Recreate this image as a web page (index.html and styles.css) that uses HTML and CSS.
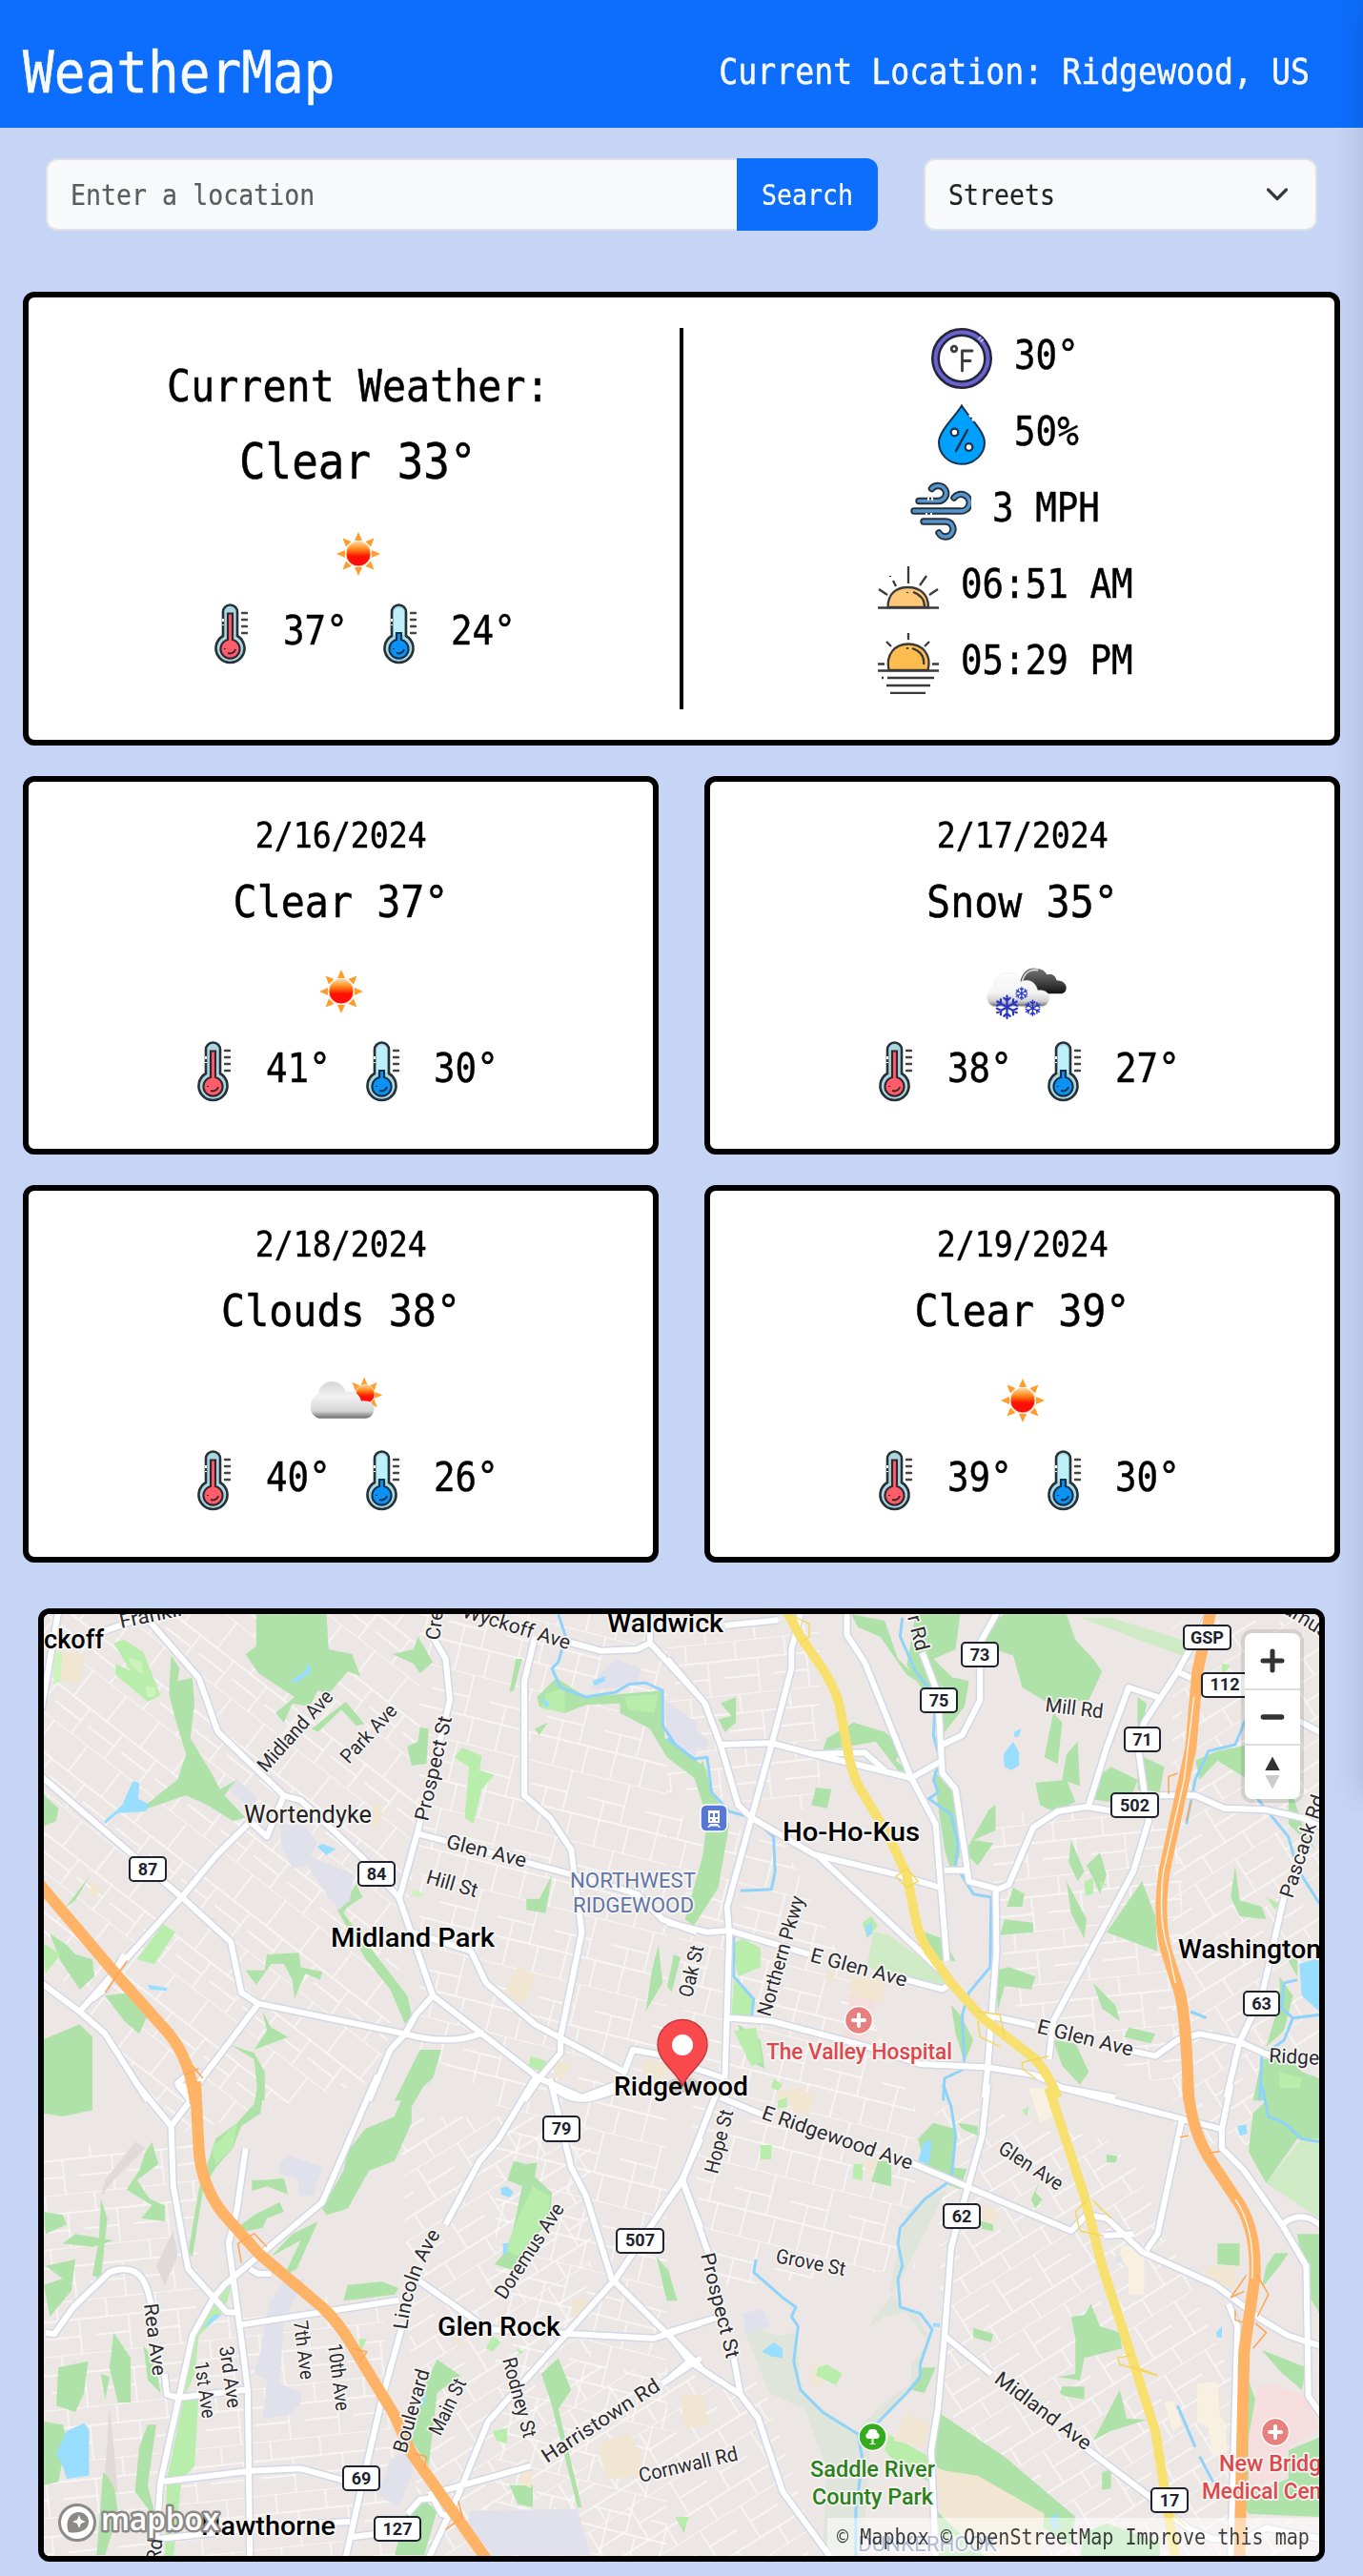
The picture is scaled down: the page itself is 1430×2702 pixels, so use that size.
FILE: index.html
```html
<!DOCTYPE html>
<html lang="en">
<head>
<meta charset="utf-8">
<title>WeatherMap</title>
<link rel="stylesheet" href="styles.css">
</head>
<body>
<svg class="sprite" width="0" height="0" aria-hidden="true">
  <defs>
    <linearGradient id="core" x1="0" y1="0" x2="0" y2="1"><stop offset="0" stop-color="#ffd9a0"/><stop offset=".3" stop-color="#ff8a1c"/><stop offset=".6" stop-color="#ff1200"/><stop offset="1" stop-color="#ff0a14"/></linearGradient>
    <linearGradient id="white-cloud" x1="0" y1="0" x2="0" y2="1"><stop offset="0" stop-color="#fcfcfc"/><stop offset=".6" stop-color="#f4f4f4"/><stop offset=".85" stop-color="#d0d0d0"/><stop offset="1" stop-color="#6a6a6a"/></linearGradient>
    <linearGradient id="gray-cloud" x1="0" y1="0" x2="0" y2="1"><stop offset="0" stop-color="#d4d4d4"/><stop offset=".4" stop-color="#f2f2f2"/><stop offset=".8" stop-color="#d6d6d6"/><stop offset="1" stop-color="#6c6c6c"/></linearGradient>
    <linearGradient id="dark-cloud" x1="0" y1="0" x2="0" y2="1"><stop offset="0" stop-color="#777"/><stop offset=".6" stop-color="#3e3e3e"/><stop offset="1" stop-color="#111"/></linearGradient>
    <g id="flake" fill="none" stroke="#2a35c8" stroke-width="6" stroke-linecap="round"><path d="M0-32V32M-28-16L28 16M-28 16L28-16M-9-26L0-18L9-26M-9 26L0 18L9 26M-29-4L-17-10L-18-22M29 4L17 10L18 22M-29 4L-17 10L-18 22M29-4L17-10L18-22"/></g>
  </defs>
  <symbol id="sun" viewBox="0 0 100 100">
    <path fill="#ff9d2b" d="M50 27l4 9h-8zM50 73l4-9h-8zM27 50l9-4v8zM73 50l-9-4v8zM33.500 33.500l9 3.500-5.500 5.500zM66.500 33.500l-9 3.500 5.500 5.500zM33.500 66.500l9-3.500-5.500-5.500zM66.500 66.500l-9-3.500 5.500-5.500z"/>
    <circle cx="50" cy="50" r="13" fill="url(#core)" stroke="#ffd2a8"/>
  </symbol>
  <symbol id="snow" viewBox="0 0 100 100">
    <g transform="translate(-2.500 15) scale(.3333)">
      <path fill="url(#dark-cloud)" d="M150 72C158 40 180 26 205 34 222 34 230 46 234 52 250 46 262 58 264 70 284 70 298 84 294 98 292 108 284 112 272 112H200L150 80z"/>
      <path fill="none" stroke="#ddd" stroke-width="5" d="M155 76C162 46 182 34 206 38"/>
      <path fill="url(#white-cloud)" stroke="#ececec" stroke-width="2" d="M66 152C46 146 38 122 52 102 54 94 60 92 66 90 66 60 92 44 118 46 140 48 148 62 150 76 176 62 200 76 204 102 228 98 246 112 240 132 236 146 228 152 216 152z"/>
      <use href="#flake" transform="translate(108 154) scale(1.100)"/><use href="#flake" transform="translate(189 157) scale(.75)"/><use href="#flake" transform="translate(154 111) scale(.6)"/>
    </g>
  </symbol>
  <symbol id="cloud" viewBox="0 0 100 100">
    <g transform="translate(2.500 12) scale(.3333)">
      <path fill="#ffa02e" d="M215 40l11 27h-22zM177 56l26 12-16 16zM255 56l-24 12 16 16zM273 97l-27-11v22zM256 136l-10-27-14 16z"/>
      <circle cx="218" cy="94" r="30" fill="url(#core)" stroke="#ffd2a8" stroke-width="3"/>
      <path fill="url(#gray-cloud)" d="M72 170C46 164 38 132 54 106 58 100 64 96 70 94 72 70 92 54 114 54 138 56 152 70 158 88 180 80 200 92 206 116 226 112 248 122 246 142 244 160 234 170 218 170z"/>
    </g>
  </symbol>
  <symbol id="thermo" viewBox="0 0 64 64">
    <path fill="#abd8e0" stroke="#263238" stroke-width="2.600" d="M24 34V9a7.500 7.500 0 0 1 15 0V34a15 15 0 1 1-15 0z"/>
    <path stroke="#444" stroke-width="2.400" stroke-linecap="round" d="M44 10h5M44 17h5M44 24h5M44 31h5"/>
  </symbol>
  <symbol id="high" viewBox="0 0 64 64">
    <use href="#thermo"/><path fill="#ff5d6c" stroke="#33262c" stroke-width="2.200" d="M29 38V10.500h5V38a10 10 0 1 1-5 0z"/>
    <path fill="none" stroke="#40262c" stroke-width="2" d="M37 48c-1 4-5 5-8 4M26 47v1"/><path stroke="#fff" stroke-width="2" d="M24 16v3M24 22v1"/>
  </symbol>
  <symbol id="low" viewBox="0 0 64 64">
    <use href="#thermo"/><path fill="#bdf0f8" d="M26 10a5.500 5.500 0 0 1 11 0V33H26z"/><path fill="#0a93f5" stroke="#16304a" stroke-width="2.200" d="M29 38V31h5v7a10 10 0 1 1-5 0z"/>
    <path fill="none" stroke="#10304c" stroke-width="2" d="M37 48c-1 4-5 5-8 4M26 47v1"/><path stroke="#fff" stroke-width="2" d="M24 16v3M24 22v1"/>
  </symbol>
  <symbol id="feels" viewBox="0 0 64 64">
    <circle cx="32" cy="32" r="27.500" fill="#fff" stroke="#25253a" stroke-width="9"/><circle cx="32" cy="32" r="27.500" fill="none" stroke="#6a62d0" stroke-width="4"/>
    <path stroke="#bcb8ff" stroke-width="4" stroke-dasharray="2 1.500" d="M50 10l5 5"/>
    <g fill="none" stroke="#3b3b3b" stroke-width="2.800" stroke-linecap="round" stroke-linejoin="round"><circle cx="24" cy="22" r="2.800"/><path d="M32.500 45V24H43M33 34.500h8"/></g>
  </symbol>
  <symbol id="drop" viewBox="0 0 64 64">
    <path fill="#00a0ff" stroke="#17324a" stroke-width="2" d="M32 1.500C38 12 56 28 56 40a24 22.800 0 0 1-48 0C8 28 26 12 32 1.500z"/>
    <path stroke="#fff" stroke-width="2.500" stroke-dasharray="3 2" d="M40 11l6 8"/>
    <path stroke="#1f2f40" stroke-width="2.400" stroke-linecap="round" d="M38 27L26 49"/>
    <g fill="#fff" stroke="#1f2f40" stroke-width="2.200"><circle cx="24.500" cy="29.500" r="3.800"/><circle cx="39.500" cy="45" r="3.800"/></g>
  </symbol>
  <symbol id="wind" viewBox="0 0 64 64">
    <g fill="none" stroke-linecap="round"><path stroke="#26313c" stroke-width="7.400" d="M9 21.500H29a8.500 8 0 1 0-6.500-13M4 32H52a9 8.800 0 1 0-6-14M14 43H37a8 8 0 1 1-7 12"/>
    <path stroke="#5495cf" stroke-width="3.600" d="M9 21.500H29a8.500 8 0 1 0-6.500-13M4 32H52a9 8.800 0 1 0-6-14M14 43H37a8 8 0 1 1-7 12"/></g>
    <path stroke="#fff" stroke-width="2" d="M19 18v3M23 18v3M17 34v3M22 34v3"/>
  </symbol>
  <symbol id="sunrise" viewBox="0 0 64 64">
    <path fill="#ffc878" stroke="#3a3a3a" stroke-width="2.300" d="M10.500 53C10.500 38 20 32 31.500 32S53 38 53 53z"/>
    <g fill="none" stroke="#3a3a3a" stroke-width="2.300"><path d="M0 53.500H64M32 10V28M16 25l3 6M13 20v1M51 20l-7 10M1 34l9 6M63 34l-9 6M31 37v1M37 37c8 3 12 8 12 15"/></g>
  </symbol>
  <symbol id="sunset" viewBox="0 0 64 64">
    <path fill="#ffbd50" stroke="#3a3a3a" stroke-width="2.300" d="M11.500 39C8 22 18 11.500 32 11.500S57 22 52.500 39z"/>
    <g fill="none" stroke="#3a3a3a" stroke-width="2.300"><path d="M0 39.500H64M32 0V7M9 9l5 5M54 9l-5 5M0 32.500h7M57 32.500h7M10 47H59M4 47h2M9 55H55M13 63H50M31 15v2M36 16c9 3 13 9 12 17"/></g>
  </symbol>
</svg>

<header class="topbar">
  <span class="mono brand">WeatherMap</span>
  <span class="mono location">Current Location: Ridgewood, US</span>
</header>

<main class="page">
  <div class="controls">
    <form class="search">
      <div class="field"><span class="mono control-text">Enter a location</span></div>
      <div class="submit"><span class="mono control-text">Search</span></div>
    </form>
    <div class="select"><span class="mono control-text">Streets</span>
      <svg class="chevron" viewBox="0 0 24 24"><path d="M2.500 7L12 16.500L21.500 7" fill="none" stroke="#343a40" stroke-width="3.200" stroke-linecap="round" stroke-linejoin="round"/></svg>
    </div>
  </div>

  <section class="card current">
    <div class="summary">
      <h3 class="mono md">Current Weather:</h3>
      <h2 class="mono lg">Clear 33°</h2>
      <svg class="sky"><use href="#sun"/></svg>
      <div class="reading"><svg class="icon"><use href="#high"/></svg><span class="value c3"><span class="mono">37°</span></span><svg class="icon"><use href="#low"/></svg><span class="value c3"><span class="mono">24°</span></span></div>
    </div>
    <div class="details">
      <div class="reading"><svg class="icon"><use href="#feels"/></svg><span class="value c3"><span class="mono">30°</span></span></div>
      <div class="reading"><svg class="icon"><use href="#drop"/></svg><span class="value c3"><span class="mono">50%</span></span></div>
      <div class="reading"><svg class="icon"><use href="#wind"/></svg><span class="value c5"><span class="mono">3 MPH</span></span></div>
      <div class="reading"><svg class="icon"><use href="#sunrise"/></svg><span class="value c8"><span class="mono">06:51 AM</span></span></div>
      <div class="reading"><svg class="icon"><use href="#sunset"/></svg><span class="value c8"><span class="mono">05:29 PM</span></span></div>
    </div>
  </section>

  <section class="forecast">
    <article class="card day"><h5 class="mono sm">2/16/2024</h5><h3 class="mono md">Clear 37°</h3><svg class="sky"><use href="#sun"/></svg>
      <div class="reading"><svg class="icon"><use href="#high"/></svg><span class="value c3"><span class="mono">41°</span></span><svg class="icon"><use href="#low"/></svg><span class="value c3"><span class="mono">30°</span></span></div></article>
    <article class="card day"><h5 class="mono sm">2/17/2024</h5><h3 class="mono md">Snow 35°</h3><svg class="sky"><use href="#snow"/></svg>
      <div class="reading"><svg class="icon"><use href="#high"/></svg><span class="value c3"><span class="mono">38°</span></span><svg class="icon"><use href="#low"/></svg><span class="value c3"><span class="mono">27°</span></span></div></article>
    <article class="card day"><h5 class="mono sm">2/18/2024</h5><h3 class="mono md">Clouds 38°</h3><svg class="sky"><use href="#cloud"/></svg>
      <div class="reading"><svg class="icon"><use href="#high"/></svg><span class="value c3"><span class="mono">40°</span></span><svg class="icon"><use href="#low"/></svg><span class="value c3"><span class="mono">26°</span></span></div></article>
    <article class="card day"><h5 class="mono sm">2/19/2024</h5><h3 class="mono md">Clear 39°</h3><svg class="sky"><use href="#sun"/></svg>
      <div class="reading"><svg class="icon"><use href="#high"/></svg><span class="value c3"><span class="mono">39°</span></span><svg class="icon"><use href="#low"/></svg><span class="value c3"><span class="mono">30°</span></span></div></article>
  </section>

  <section class="map">
    <svg class="map-canvas" viewBox="46 1693 1338 988" width="1338" height="988">
      <defs>
        <pattern id="g1" width="44" height="66" patternUnits="userSpaceOnUse" patternTransform="rotate(38)"><path class="lane" d="M0 0H44M12 0V34M34 34V66M0 34H44M0 50H34"/></pattern>
        <pattern id="g2" width="62" height="72" patternUnits="userSpaceOnUse" patternTransform="rotate(14)"><path class="lane" d="M0 0H62M0 24H40M18 24V72M40 0V44M0 44H62M50 44V72"/></pattern>
        <pattern id="g3" width="52" height="56" patternUnits="userSpaceOnUse" patternTransform="rotate(-6)"><path class="lane" d="M0 0H52M0 20H52M14 0V20M36 20V56M0 38H36"/></pattern>
        <pattern id="g4" width="50" height="60" patternUnits="userSpaceOnUse" patternTransform="rotate(-32)"><path class="lane" d="M0 0H50M16 0V40M0 40H50M38 40V60M16 20H50"/></pattern>

        <!-- Secondary roads, one group per map tile -->
        <g id="roads">
          <g transform="translate(30 1680) scale(.44643 .33333)">
            <path d="M140 110L290 40M270 40L400 240L445 410L600 610L640 625L780 800L870 930L950 1240L1200 1500L1300 1560M70 30L30 340M30 550L360 930L475 1070L500 1230L540 1265L885 1360Q990 1400 1070 1355M515 700L440 800L360 930L225 1130L120 1290M30 1200L120 1290L180 1360L280 1570M225 1110L180 1220L150 1250M600 610L560 740L520 690M950 110L980 180L990 310L915 720L870 940M915 730L1280 860L1430 920L1490 1000L1570 1040M1190 110L1165 250V610L1225 680L1275 780L1300 1040L1250 1370V1420L1200 1500L1165 1570M900 1040L1040 1100L1075 1200L1190 1330L1400 1480L1420 1410L1500 1430M1250 120L1345 155L1430 150L1460 130V30M1460 130L1570 290M950 1240L910 1300L885 1360L850 1410L800 1570M540 1265L385 1540L350 1515L390 1470M1300 1560L1400 1510"/>
          </g>
          <g transform="translate(700 1680) scale(.46556 .33333)">
            <path d="M130 75L250 58M0 180L85 320L120 450L160 640L190 680L330 795L520 860L615 900M300 40L280 150V210L235 450L135 960L140 1050L130 1500M120 450L235 445L330 480L420 510L550 555L620 500M330 480L445 475L490 530M405 30V105L445 190L550 555L605 700L630 1130M575 160L610 290L620 540L650 590L680 880L745 905L770 890L825 710L880 660L945 645L1010 660M745 30L705 130V310L665 420L620 450M625 845H670M740 900L742 1100L722 1470L715 1560M340 800L600 1140L630 1180M0 1010L90 1040L140 1035L320 1110M540 1190L620 1220L630 1210M140 1310L235 1320L450 1400L570 1455L720 1465L830 1490M720 1300L830 1335M1050 1415L1100 1430L1150 1380L1200 1360L1290 1385L1360 1430M950 640L990 460L1040 270L1105 300M1220 40L1150 220L1180 240M1150 220L1075 380L1060 450L1085 690L1050 850L870 1320L860 1440M1110 610H1190L1255 650L1350 655L1430 680L1490 720M1390 930L1340 1240L1290 1385L1260 1560M1350 320L1470 410M0 1440L130 1500M830 1490L890 1530L1010 1560"/>
          </g>
          <g transform="translate(30 2190) scale(.44643 .33333)">
            <path d="M250 -20L335 120L340 310L375 570L435 660L385 780L310 1240L300 1420L510 1390M350 -10L380 40L335 120M820 -40L690 360L460 620L435 660L465 705L490 708M510 190L490 380L470 490L500 790L515 950L520 1480M40 770L60 775L105 690L190 580Q260 545 280 640L290 690M320 900L325 965L350 975L510 950M500 745L870 668M910 600L1080 760L1470 788L1580 740M980 430L1060 230L1105 160L1190 -30M880 740L830 980L780 1270L745 1480M310 1240L520 1205L640 1198L740 1235M890 1340L920 1295L950 1290L970 1340L990 1350M1580 160L1535 290L1380 600L1080 1050L1010 1280L940 1480M940 1280L1180 1190M1490 930L1580 850M1225 -30L1275 250L1310 340L1370 600L1580 880M1230 -10Q1270 50 1330 30L1400 0M1535 290L1580 440M750 1415L810 1405M680 1370L755 1365M520 570L540 585H570"/>
          </g>
          <g transform="translate(700 2190) scale(.46556 .33333)">
            <path d="M110 20L35 290L0 360M120 30L225 90M540 230L910 450L945 400L990 410L1070 515L1235 620L1340 730L1400 780L1490 820M35 290L95 530M722 -10L710 150L640 500L625 780L610 1010L595 1140L605 1480M625 780L730 900M940 1130L1100 1300M890 0L1250 130M1160 100L1105 460L1080 510M1270 -10L1250 130V190L1300 260L1385 430L1440 560L1445 970L1480 1040M1385 430Q1440 370 1490 460M985 465L1050 460M0 770L120 720M0 770L50 860L165 965L205 1040L260 1270L370 1480M150 850L165 965M0 920L50 860M1265 680L1285 750L1270 1480M1130 1340L1180 1390L1230 1420H1300L1350 1385L1480 1420"/>
          </g>
        </g>
        <path id="lincoln" d="M427 2444Q434 2385 466 2338"/>
      </defs>

      <rect x="46" y="1693" width="1338" height="988" fill="#ece7e4"/>

      <!-- Street grid -->
      <g stroke="none">
        <path fill="url(#g1)" d="M46 1693H440V1920L400 2180 180 2240 46 2050z"/>
        <path fill="url(#g2)" d="M440 1693H700V2681H520V2200L440 2150zM700 1900L820 1930 960 2210V2380L740 2400z"/>
        <path fill="url(#g3)" d="M46 2250H210L200 2681H46zM210 2430L400 2400 420 2681H200zM700 1693L860 1700V1900L700 1880zM1030 1900H1240V2200L1060 2100z"/>
        <path fill="url(#g4)" d="M420 2220H620V2681H440zM620 2480L800 2500 860 2681H620zM980 2200L1180 2250 1380 2681H1040L990 2500zM1230 1700H1384V2250H1230z"/>
      </g>

      <!-- Land use, parks and water -->
      <g transform="translate(30 1680) scale(.44643 .33333)">
        <g fill="#aee2a8"><path d="M535 40H700L705 150L760 165L780 235L750 220L705 290L680 280L660 330L620 320L600 380L580 350L625 300L540 225L510 165L535 140zM855 165L905 150L915 110L950 190L920 225L905 195zM335 170L355 210L350 250L385 240L390 320L380 430L430 540L450 590L490 560L460 610L510 680L480 690L420 640L370 610L280 650L275 640L350 560L370 480L345 370L330 290zM890 455L915 440L920 395L940 400L935 510L900 515zM665 400L745 315L790 385L770 390L735 340L680 410zM50 1045L90 1080L110 1110L150 1125L155 1180L120 1220L75 1130zM30 600L70 650L65 690L30 710zM560 1110L635 1105L640 1150L690 1165L685 1190L650 1170L625 1250L620 1190L600 1140L570 1140L535 1205L510 1160L555 1160zM725 970L770 890L785 930L750 960L740 980L890 1240L900 1300L885 1330L850 1220L790 1120zM180 1240L240 1230L280 1300L260 1360L225 1320zM30 1380L120 1330L150 1370V1560H30zM475 1395L530 1420L555 1480V1570H540L530 1440zM550 1290L570 1340L610 1370L530 1410L560 1350zM920 1410H970L950 1500L890 1570H860zM1170 935H1200L1230 860L1215 980L1170 970zM1480 1080L1490 1200L1450 1290L1465 1160zM1130 285L1145 180H1160L1140 280zM1195 300L1240 240L1310 300L1490 280L1495 430L1570 500V560L1500 490L1460 400L1390 350L1390 320L1310 325L1260 350L1200 330zM1190 400L1220 380L1200 420zM85 965L145 860L110 940z"/></g>
        <g fill="#b9edab"><path d="M200 130L225 120L270 160L310 295L280 315L205 230V195L240 220zM1000 490L1020 460L1065 485L1060 530L1095 545L1065 590L1045 700L1025 680L1035 520zM315 1015L345 1040L295 1140L255 1125zM1180 1430L1225 1450L1220 1490L1175 1460zM30 1070L75 1110L40 1170zM1215 290L1260 270V350L1205 335zM1400 300L1480 290L1470 350L1410 340z"/></g>
        <path fill="#cdf3bd" d="M235 175L265 190L270 230L240 200zM275 265L300 270L295 300H278zM905 905L930 920L920 930L900 925zM55 150L80 160L95 240L60 260z"/>
        <path fill="#f1e6d1" d="M80 155L130 165L120 255L75 245zM800 660L820 635L835 670L810 720zM145 880L180 905L145 935zM1150 1150L1195 1175L1160 1270L1115 1235zM1240 1440L1275 1460L1250 1505L1235 1490zM1450 1440L1500 1450V1500L1440 1490z"/>
        <path fill="#e1e1ec" d="M590 700L650 705L680 760L650 830L620 840L595 770zM660 800L765 860L755 940L730 970L705 930L655 830zM470 590L490 560L540 620L520 650zM1340 230L1380 180L1440 210L1430 260L1320 280zM1495 310L1570 380V490L1500 420z"/>
        <path fill="#99ddff" d="M178 690L220 640L245 565L260 570L258 620L285 640L275 660L210 665L180 700zM280 1205L325 1215V1225L285 1220zM615 250L650 220L658 190L665 220L630 255zM678 770L690 762L722 778L700 798zM1325 250L1355 235V250L1330 265zM1205 300L1225 320L1215 335z"/>
      </g>
      <g transform="translate(700 1680) scale(.46556 .33333)">
        <g fill="#aee2a8"><path d="M415 40L490 60L520 180L585 270L540 230L480 110L430 80zM560 40H660L650 150L600 180L680 290L620 260L600 330L540 200zM760 40H900L920 120L960 180L980 220L950 310L860 320L800 270L780 170L700 130L720 75zM120 320L155 300V380L130 410L115 370L145 360zM360 430L420 380L490 410L530 460L515 500L550 540L520 530L470 440L350 470zM335 585L370 590L360 650L325 640zM620 230L680 250L670 330L620 420zM600 530L650 610L660 800L640 850L625 780L610 640zM725 655L740 640V720L690 750L735 760L700 830L670 790zM870 350L890 380L880 510L850 490zM900 480L925 440L930 580L890 560zM830 570L900 560L920 630L870 660L840 640zM910 750L940 850L925 880L905 820zM975 790L990 860L975 920L960 870L945 830zM900 880L945 1000L940 1060L910 980zM780 900L805 920L800 960L765 960zM760 1000L825 1010V1040L750 1050zM960 560L1000 520L1060 560L1040 640L950 620zM1060 300L1080 320L1060 480L1120 520L1110 600L1060 590zM1070 880L1100 990L1105 1100L990 1040L1020 980zM1280 830L1290 940L1340 960L1350 1000L1290 990L1270 930zM1240 470L1310 450V560L1240 500L1200 560L1190 500zM740 1160L770 1150L830 1180L820 1220L760 1210L745 1290zM960 1200L1010 1270L1020 1320L980 1280zM870 1380L920 1390L950 1480L930 1520L890 1460zM1040 1340L1100 1360L1090 1390L1030 1370zM580 1040L620 1060L650 1130L600 1130zM80 500L100 590L140 700L115 900L60 1020L40 1000L80 800L90 680L60 550zM0 440L50 480L90 530L80 570L0 470zM1380 1180L1410 1240L1390 1350L1350 1400L1380 1260zM1340 1440L1400 1430L1430 1480L1470 1500V1570H1320zM1400 1130L1420 1110V1180zM1400 560L1430 700L1460 780L1400 700zM640 1270L660 1300L690 1380L670 1450L650 1360zM160 1330L210 1380L220 1470L180 1440zM0 1210L15 1110L30 1120L10 1230z"/></g>
        <path fill="#b9edab" d="M145 1080L170 1060L210 1090V1150L160 1180zM150 1190L195 1250L185 1310L145 1300zM440 1010L460 990L475 1020L450 1060zM940 880L960 870V920L942 925zM975 880L990 890L975 900zM150 1350L200 1340L215 1450L190 1460zM240 1500L260 1520L250 1540L235 1530zM1250 195L1270 200L1250 230zM1350 930L1380 950L1370 970zM1380 1480L1430 1500L1420 1560L1380 1540z"/>
        <path fill="#cfebc6" d="M465 1040L500 1050L620 1170L630 1210L550 1190L450 1150zM930 50L1000 50L1180 130L1160 170z"/>
        <path fill="#f1e6d1" d="M415 1180L490 1190L485 1260L410 1240zM360 1160L375 1170V1200L355 1190zM205 630L218 640L212 660L203 655zM250 1540L310 1530V1570H250z"/><path fill="#f5dedd" d="M410 1240L470 1255L450 1370L395 1400z"/>
        <path fill="#e1e1ec" d="M0 310L50 380L95 440L85 470L0 410z"/>
        <path fill="#99ddff" d="M758 480L780 440L793 475V515L775 530L760 520zM782 410L798 398L792 425H782zM1425 1140L1470 1120V1290L1430 1240zM446 1020L462 1010V1045L450 1055z"/>
      </g>
      <g transform="translate(30 2190) scale(.44643 .33333)">
        <g fill="#aee2a8"><path d="M36 -10H150V70L80 90L36 80zM540 -20H555L545 80L500 120L480 190L440 250L410 320L385 530L375 520L400 320L440 160L490 110L530 50zM890 -10H930L900 60V110L860 230L800 260L750 380L700 400L690 380L740 260L750 200L790 130L860 90zM275 200L290 170L305 240L255 290L285 350L320 370V420L265 410L290 370L230 320L260 260zM36 390L80 400L90 430L40 460zM110 460L200 480L150 500L80 490zM170 350L185 410L170 600L150 590L165 480zM40 560L110 540L100 640L50 720L36 620L80 600zM525 290H550L600 285L610 335L560 310L525 325zM490 440L530 400L590 360L600 390L560 410L550 440L515 450zM680 420L630 570L600 590L640 480L570 530L620 460zM740 670L750 620L830 610L870 630L860 650L770 665zM960 855L1015 905L960 960L940 1190L900 1110L930 940zM1140 230L1170 240L1195 235L1190 280L1230 330L1225 420L1180 480L1150 580L1095 555L1130 500L1160 310L1125 290zM1475 530L1500 570L1525 670L1500 670zM1245 850L1275 950L1245 1010L1300 1320H1290L1230 1000L1205 900zM200 770L240 850V990L210 990L190 880zM70 880L140 860L130 960L110 1020L65 1000zM36 1050L80 1060L90 1100L70 1240L36 1250zM280 1060L300 1060L280 1250L300 1360L250 1270L260 1130zM175 1210L200 1230L210 1340L180 1470H160zM1130 1250L1185 1250V1320L1150 1310zM890 1330L930 1300L960 1330L930 1470H860zM270 810L300 870L310 960L280 920zM1520 1350L1550 1350L1540 1400zM170 900L190 910L180 980z"/></g>
        <g fill="#b9edab"><path d="M490 110L480 190L440 240L430 190zM1185 310L1225 340L1220 410L1150 530L1120 510L1160 380zM455 620L480 610L460 700L400 780L390 900L370 960H400L390 1190L360 1230L340 1480L320 1480L325 1230L370 940L395 740zM1090 1080L1125 1070V1120L1100 1110zM1090 780L1110 800L1090 830L1075 820zM1145 820L1163 830L1155 840zM775 790H795L780 830z"/></g>
        <path fill="#e1e1ec" d="M590 240L610 210L690 250L670 340H635V290L590 270zM600 610L650 600L600 730L590 930L640 960V990L615 1030L550 1040L560 920L530 900L545 830L565 680zM850 1170L910 1130L900 1220L870 1320L820 1280zM1040 1330L1290 1325L1320 1470H1090L1030 1370z"/>
        <path fill="#f1e6d1" d="M1280 660L1320 670L1290 730L1275 720zM1350 1110L1410 1090L1440 1150V1220L1360 1230L1340 1140zM1160 1200L1185 1210L1180 1260L1150 1240zM990 780L1025 800L1015 815zM1540 980L1570 960V1070L1550 1060z"/>
        <path fill="#99ddff" d="M65 1150L90 1080L130 1055L142 1075V1220L90 1230L80 1190zM1110 315L1125 310L1140 330L1130 345L1110 335zM1115 490L1128 488L1125 520L1115 525zM410 755L435 715L455 712L430 740zM927 930L935 935L930 1000H925z"/>
        <path fill="#dfdad7" d="M250 170L275 190L200 290L170 340L180 290zM340 450L350 530L320 620L300 560zM190 1000L200 1130L210 1280L180 1210z"/>
      </g>
      <g transform="translate(700 2190) scale(.46556 .33333)">
        <path fill="#dfe5da" d="M630 320L520 620L450 760L490 720L560 700L590 790L560 930L460 1070L440 1480H350L360 1200L310 1010L230 960L170 750L250 780L290 770L300 950L420 1090L480 1000L550 930V870L590 800L500 640L540 390L580 350z"/>
        <g fill="#aee2a8"><path d="M565 160L600 110L650 130L640 280L580 240zM655 110L700 120V150L665 130zM640 250L675 255L660 320L625 300zM475 230H505V310L460 295zM840 290L830 330L845 350L830 380L820 350zM705 420H735V450L710 445zM990 210L1015 215L1010 235H990zM690 755L735 775L730 800L690 785zM910 720L940 715L955 680L975 750L1020 770L1025 820L940 850L930 920L880 910L920 900V790zM890 940L940 940V980L895 970L885 960zM1020 950L1035 1040L1080 1045L1000 1080L960 1110zM1240 490H1290V560L1240 555zM1370 520L1400 520L1380 560L1340 630L1350 560zM1380 0H1480V190L1420 160L1350 300L1310 200L1320 80zM1420 460H1470V710L1440 640zM1340 825L1440 880L1430 950L1380 890zM1310 920L1330 1000L1310 1250L1300 1200zM1400 1140L1470 1100V1350L1310 1340L1290 1290L1400 1230zM575 880L605 880L580 960L550 950zM610 1020L760 1160L920 1350L910 1440L700 1250L600 1190zM0 560L20 660L5 670zM980 1210L1000 1200V1260L980 1265zM600 1320L720 1480H600zM940 1400L990 1370L1110 1430V1480H930z"/></g>
        <path fill="#b9edab" d="M340 880L360 870L395 900L380 935L335 905zM500 1090L590 1160L590 1240L520 1190L490 1140zM420 240H440V290L418 285zM250 40L270 30V60L248 65zM210 180H235V225H210zM800 70L815 60L810 90zM20 1350H50L35 1390zM30 980L70 965L60 1000L35 1005z"/>
        <path fill="#cfebc6" d="M1430 160H1480V420L1350 300z"/>
        <path fill="#f1e6d1" d="M540 1020L590 1060L580 1130L510 1110zM605 1200L700 1220L850 1340L840 1480H720L620 1350zM325 865L345 870L330 900L355 920L340 950L320 920zM1220 560H1280V630L1210 610zM710 370L745 390L735 430L710 420zM450 220L475 230L460 275L445 265zM280 0L330 20L320 90L280 70zM30 970L80 965L95 1060L40 1070z"/>
        <path fill="#f8f1e1" d="M1025 495L1075 500V650H1040V570L1020 530zM1195 930L1240 925L1245 1030L1260 1060V1150L1225 1150L1220 1070L1195 1050zM1120 990L1140 985L1160 1060L1140 1080zM815 0H850L870 90L840 110z"/>
        <path fill="#f5dedd" d="M1330 940L1360 930L1440 970L1470 1070L1400 1130L1380 1230L1310 1250V1100z"/>
        <path fill="#e1e1ec" d="M170 710L215 695L230 750L180 780zM1010 530H1025V550H1010z"/>
        <path fill="#99ddff" d="M565 230L580 165L597 170L590 240zM213 830L240 800L260 820V850L235 845zM1285 120L1305 115L1307 145L1290 150zM1237 770L1250 750V785H1240zM865 1350L880 1340V1390H868zM598 740H615V752H600z"/>
      </g>

      <!-- Streams -->
      <g class="stream">
        <path d="M1245 40L1262 110L1245 190L1230 210L1250 270L1310 300L1380 285L1410 260L1450 255L1490 280L1490 390L1520 450L1570 500" transform="translate(30 1680) scale(.44643 .33333)"/>
        <path d="M0 430L60 495L90 490L100 600L140 660L190 680L240 740L243 850L235 905L165 910M150 1050V1180L195 1250L190 1310M530 50L525 110L560 220L605 300L600 420L615 500L600 560L610 600L590 620L640 670L655 760L650 830L690 920L730 930L728 1150L680 1230L665 1300L670 1470L625 1500L622 1570M1310 350L1280 450L1220 470L1190 560L1170 700M1330 620L1400 740L1420 840L1470 950M1180 1290L1215 1310M1420 1190L1390 1200L1385 1280L1410 1310L1470 1300M1410 1310L1390 1380L1340 1430L1335 1570" transform="translate(700 1680) scale(.46556 .33333)"/>
        <path d="M622 -10L640 60L650 150L640 290L580 350L525 440L520 490L530 560L520 600L525 690L570 710L597 760L570 870V910L540 960L470 1060M200 540L195 580L260 660L290 690L280 720L295 750L285 860L300 950L350 1020L430 1090L440 1170L425 1330V1480M1340 -10L1355 90L1390 110L1430 160L1470 170M1150 1000L1190 1130M1200 1160L1230 1240" transform="translate(700 2190) scale(.46556 .33333)"/>
      </g>

      <use href="#roads" class="casing"/><use href="#roads" class="road"/>

      <!-- Route 17 -->
      <g class="yellow">
        <path d="M270 30L300 110L350 210Q385 290 390 340L410 490Q420 560 440 600L500 740L540 860L560 1000Q570 1070 600 1120L640 1200L710 1310L830 1440Q860 1490 880 1560" transform="translate(700 1680) scale(.46556 .33333)"/>
        <path d="M860 0L940 340L980 560L1050 860L1100 1080L1145 1480" transform="translate(700 2190) scale(.46556 .33333)"/>
      </g>
      <g class="ramp-yellow">
        <path d="M290 50L320 70V110L300 130M515 865L540 840L565 880L540 900zM700 1290L750 1300L760 1370M700 1320L705 1370L750 1400M860 1430L800 1450L800 1470L830 1500" transform="translate(700 1680) scale(.46556 .33333)"/>
        <path d="M945 355L920 390L930 450L980 465M960 355L1000 410M1050 840L1015 850L1020 870L1105 905L1050 875M1120 1320L1170 1380" transform="translate(700 2190) scale(.46556 .33333)"/>
      </g>
      <!-- Route 208 and Garden State Parkway -->
      <g class="orange">
        <path d="M20 880L210 1180L330 1360Q380 1440 392 1580" transform="translate(30 1680) scale(.44643 .33333)"/>
        <path d="M392 -20L400 190Q405 310 460 400L540 520L690 690Q730 740 760 810L860 1030L900 1150L1080 1490" transform="translate(30 2190) scale(.44643 .33333)"/>
        <path d="M1225 30L1195 220L1180 460L1120 850Q1105 1000 1125 1100L1155 1230Q1170 1310 1175 1570" transform="translate(700 1680) scale(.46556 .33333)"/>
        <path d="M1173 -10Q1180 140 1230 240L1280 345Q1330 440 1324 600L1300 830L1290 1480" transform="translate(700 2190) scale(.46556 .33333)"/>
      </g>
      <g class="median">
        <path d="M1187 300L1165 560L1118 850Q1105 1000 1130 1100L1145 1200" transform="translate(700 1680) scale(.46556 .33333)"/>
        <path d="M1280 350Q1325 440 1318 600" transform="translate(700 2190) scale(.46556 .33333)"/>
      </g>
      <g class="ramp-orange">
        <path d="M180 1230L210 1170L232 1130M365 1490L400 1470M385 1460L410 1500" transform="translate(30 1680) scale(.44643 .33333)"/>
        <path d="M500 550L492 490L530 458L560 500M760 820L795 830L780 860M905 1150L935 1160L930 1200M1010 1300L1020 1350L980 1390" transform="translate(30 2190) scale(.44643 .33333)"/>
        <path d="M1130 605V550L1150 540M1180 630L1170 690" transform="translate(700 1680) scale(.46556 .33333)"/>
        <path d="M1155 155L1175 150M1220 205L1245 200M1305 590L1270 660L1300 640M1330 590L1355 650L1330 720M1280 700V730L1300 740M1325 740L1350 770L1320 820" transform="translate(700 2190) scale(.46556 .33333)"/>
      </g>

      <!-- Street names -->
      <g class="street">
        <text transform="translate(127 1708) rotate(-12)" textLength="66" lengthAdjust="spacingAndGlyphs">Frankli</text>
        <text transform="translate(279 1860) rotate(-48)" textLength="107" lengthAdjust="spacingAndGlyphs">Midland Ave</text>
        <text transform="translate(366 1851) rotate(-47)" textLength="76" lengthAdjust="spacingAndGlyphs">Park Ave</text>
        <text transform="translate(449 1911) rotate(-77)" textLength="112" lengthAdjust="spacingAndGlyphs">Prospect St</text>
        <text transform="translate(461 1721) rotate(-83)">Cres</text>
        <text transform="translate(484 1696) rotate(17)" textLength="117" lengthAdjust="spacingAndGlyphs">Wyckoff Ave</text>
        <text transform="translate(467 1938) rotate(14)" textLength="86" lengthAdjust="spacingAndGlyphs">Glen Ave</text>
        <text transform="translate(446 1975) rotate(16)" textLength="55" lengthAdjust="spacingAndGlyphs">Hill St</text>
        <text transform="translate(726 2096) rotate(-77)" textLength="55" lengthAdjust="spacingAndGlyphs">Oak St</text>
        <text transform="translate(808 2116) rotate(-74)" textLength="130" lengthAdjust="spacingAndGlyphs">Northern Pkwy</text>
        <text transform="translate(849 2057) rotate(15)" textLength="104" lengthAdjust="spacingAndGlyphs">E Glen Ave</text>
        <text transform="translate(1087 2132) rotate(14)" textLength="103" lengthAdjust="spacingAndGlyphs">E Glen Ave</text>
        <text transform="translate(952 1696) rotate(76)" textLength="38" lengthAdjust="spacingAndGlyphs">r Rd</text>
        <text transform="translate(1096 1795) rotate(7)" textLength="61" lengthAdjust="spacingAndGlyphs">Mill Rd</text>
        <text transform="translate(1356 1992) rotate(-72)" textLength="112" lengthAdjust="spacingAndGlyphs">Pascack Rd</text>
        <text transform="translate(1345 1691) rotate(32)">amus</text>
        <text transform="translate(1331 2163) rotate(3)">Ridgewood</text>
        <text transform="translate(151 2417) rotate(83)" textLength="76" lengthAdjust="spacingAndGlyphs">Rea Ave</text>
        <text transform="translate(230 2462) rotate(82)" textLength="65" lengthAdjust="spacingAndGlyphs">3rd Ave</text>
        <text transform="translate(204 2478) rotate(82)" textLength="60" lengthAdjust="spacingAndGlyphs">1st Ave</text>
        <text transform="translate(308 2435) rotate(83)" textLength="62" lengthAdjust="spacingAndGlyphs">7th Ave</text>
        <text transform="translate(344 2459) rotate(83)" textLength="71" lengthAdjust="spacingAndGlyphs">10th Ave</text>
        <text><textPath href="#lincoln">Lincoln Ave</textPath></text>
        <text transform="translate(530 2413) rotate(-57)" textLength="115" lengthAdjust="spacingAndGlyphs">Doremus Ave</text>
        <text transform="translate(426 2574) rotate(-74)" textLength="90" lengthAdjust="spacingAndGlyphs">Boulevard</text>
        <text transform="translate(462 2556) rotate(-64)" textLength="63" lengthAdjust="spacingAndGlyphs">Main St</text>
        <text transform="translate(527 2475) rotate(75)" textLength="86" lengthAdjust="spacingAndGlyphs">Rodney St</text>
        <text transform="translate(574 2584) rotate(-33)" textLength="143" lengthAdjust="spacingAndGlyphs">Harristown Rd</text>
        <text transform="translate(672 2604) rotate(-13)" textLength="106" lengthAdjust="spacingAndGlyphs">Cornwall Rd</text>
        <text transform="translate(753 2281) rotate(-76)" textLength="68" lengthAdjust="spacingAndGlyphs">Hope St</text>
        <text transform="translate(798 2222) rotate(19)" textLength="166" lengthAdjust="spacingAndGlyphs">E Ridgewood Ave</text>
        <text transform="translate(735 2365) rotate(76)" textLength="113" lengthAdjust="spacingAndGlyphs">Prospect St</text>
        <text transform="translate(813 2373) rotate(11)" textLength="74" lengthAdjust="spacingAndGlyphs">Grove St</text>
        <text transform="translate(1046 2257) rotate(33)" textLength="76" lengthAdjust="spacingAndGlyphs">Glen Ave</text>
        <text transform="translate(1042 2498) rotate(37)" textLength="121" lengthAdjust="spacingAndGlyphs">Midland Ave</text>
        <text transform="translate(168 2688) rotate(-84)">Rd</text>
      </g>

      <!-- Route shields -->
      <g class="shield">
        <rect x="136" y="1948" width="38" height="25" rx="4"/><rect x="376" y="1953" width="38" height="25" rx="4"/><rect x="1009" y="1723" width="38" height="25" rx="4"/><rect x="966" y="1771" width="38" height="25" rx="4"/><rect x="1242" y="1705" width="49" height="25" rx="4"/><rect x="1261" y="1755" width="49" height="25" rx="4"/><rect x="1180" y="1812" width="37" height="25" rx="4"/><rect x="1166" y="1881" width="49" height="25" rx="4"/><rect x="1305" y="2089" width="37" height="25" rx="4"/><rect x="570" y="2220" width="38" height="26" rx="4"/><rect x="647" y="2338" width="49" height="25" rx="4"/><rect x="360" y="2587" width="38" height="25" rx="4"/><rect x="393" y="2640" width="48" height="25" rx="4"/><rect x="990" y="2312" width="38" height="25" rx="4"/><rect x="1208" y="2610" width="38" height="25" rx="4"/>
        <g><text x="155" y="1967">87</text><text x="395" y="1972">84</text><text x="1028" y="1742">73</text><text x="985" y="1790">75</text><text x="1266.500" y="1724">GSP</text><text x="1285" y="1773">112</text><text x="1198.500" y="1831">71</text><text x="1190.500" y="1900">502</text><text x="1323.500" y="2108">63</text><text x="589" y="2239">79</text><text x="671.500" y="2356">507</text><text x="379" y="2606">69</text><text x="417" y="2659">127</text><text x="1009" y="2331">62</text><text x="1227" y="2629">17</text></g>
      </g>

      <!-- Places -->
      <g class="town">
        <text x="46" y="1729" textLength="63" lengthAdjust="spacingAndGlyphs">ckoff</text>
        <text x="637" y="1712" textLength="122" lengthAdjust="spacingAndGlyphs">Waldwick</text>
        <text x="821" y="1931" textLength="144" lengthAdjust="spacingAndGlyphs">Ho-Ho-Kus</text>
        <text x="347" y="2042" textLength="172" lengthAdjust="spacingAndGlyphs">Midland Park</text>
        <text x="1236" y="2054" textLength="150" lengthAdjust="spacingAndGlyphs">Washington</text>
        <text x="644" y="2198" textLength="141" lengthAdjust="spacingAndGlyphs">Ridgewood</text>
        <text x="459" y="2450" textLength="129" lengthAdjust="spacingAndGlyphs">Glen Rock</text>
        <text x="211" y="2659" textLength="141" lengthAdjust="spacingAndGlyphs">Hawthorne</text>
      </g>
      <g class="area">
        <text class="hamlet" x="256" y="1912" textLength="134" lengthAdjust="spacingAndGlyphs">Wortendyke</text>
        <text class="district" x="598" y="1980" textLength="132" lengthAdjust="spacingAndGlyphs">NORTHWEST</text>
        <text class="district" x="601" y="2006" textLength="127" lengthAdjust="spacingAndGlyphs">RIDGEWOOD</text>
        <text class="district" x="900" y="2676" textLength="146" lengthAdjust="spacingAndGlyphs">DUNKERHOOK</text>
        <text class="medical" x="804" y="2160" textLength="195" lengthAdjust="spacingAndGlyphs">The Valley Hospital</text>
        <text class="medical" x="1279" y="2592" textLength="120" lengthAdjust="spacingAndGlyphs">New Bridge</text>
        <text class="medical" x="1261" y="2621" textLength="145" lengthAdjust="spacingAndGlyphs">Medical Cente</text>
        <text class="park" x="850" y="2598" textLength="131" lengthAdjust="spacingAndGlyphs">Saddle River</text>
        <text class="park" x="852" y="2627" textLength="127" lengthAdjust="spacingAndGlyphs">County Park</text>
      </g>
      <g stroke="#fff" stroke-width="1.500">
        <circle cx="901" cy="2119" r="14.500" fill="#e8807f"/><circle cx="1338" cy="2551" r="14.500" fill="#e8807f"/>
        <circle cx="915.500" cy="2556" r="14.500" fill="#35ac20"/>
        <rect x="735" y="1893" width="28" height="28" rx="6" fill="#5878d8"/>
      </g>
      <path fill="none" stroke="#fff" stroke-width="4" stroke-linecap="round" d="M901 2113V2125M895 2119H907M1338 2545V2557M1332 2551H1344"/>
      <path fill="#fff" d="M915.500 2548c4 0 5 2 5 4 3 1 3 6-1 6h-3v5h2v1h-6v-1h2v-5h-3c-4 0-4-5-1-6 0-2 1-4 5-4z"/>
      <path fill="#fff" fill-rule="evenodd" d="M743 1899h12v13h-12zM745 1902v4h3v-4zM750 1902v4h3v-4zM745 1908v2h2v-2zM751 1908v2h2v-2zM745 1913h8l3 4h-2l-1-1.500h-8l-1 1.500h-2z"/>

      <!-- Marker -->
      <ellipse cx="717" cy="2187" rx="17" ry="8" fill="#000" opacity=".13"/>
      <path fill="#fa4a4d" stroke="#c43a3c" stroke-width="1.500" d="M716 2188C711 2174 690 2163 690 2144.500a26 26 0 0 1 52 0C742 2163 721 2174 716 2188z"/>
      <circle cx="716" cy="2145" r="11" fill="#fff"/>

      <!-- Logo -->
      <g class="logo"><circle cx="81" cy="2646" r="18.500" fill="#fff" stroke="#8c8987" stroke-width="3"/><path fill="#8c8987" d="M72 2656c-4-10 0-20 10-21 7 0 11 5 11 10 0 9-10 13-21 11z"/><path fill="#fff" d="M83 2638l2 5 5 2-5 2-2 5-2-5-5-2 5-2z"/><text x="106" y="2654" textLength="124" lengthAdjust="spacingAndGlyphs">mapbox</text></g>
    </svg>
    <div class="zoom">
      <svg viewBox="0 0 58 58"><path d="M29 19V39M19 29H39" fill="none" stroke="#333" stroke-width="5" stroke-linecap="round"/></svg>
      <svg viewBox="0 0 58 58"><path d="M19 29H39" fill="none" stroke="#333" stroke-width="5.500" stroke-linecap="round"/></svg>
      <svg viewBox="0 0 58 58"><path d="M21 27L29 12L37 27z" fill="#333"/><path d="M21 32L29 47L37 32z" fill="#ccc"/></svg>
    </div>
    <div class="attribution"><span class="mono">© Mapbox © OpenStreetMap Improve this map</span></div>
  </section>
</main>
<div class="drawer-shadow"></div>
</body>
</html>
```
FILE: styles.css
```css
* { box-sizing: border-box; }
body { margin: 0; position: relative; width: 1430px; height: 2702px; overflow: hidden; background: #c6d4f6; color: #000; font-family: "DejaVu Sans Mono", monospace; }
.sprite { position: absolute; }
svg { display: block; flex: none; }
h2, h3, h5 { margin: 0; font-weight: 400; }

.mono { display: inline-block; white-space: pre; transform: scaleX(.893); transform-origin: left center; -webkit-text-stroke: .5px currentColor; }
h2.mono, h3.mono, h5.mono { transform-origin: center; }

.topbar { height: 134px; padding: 16px 56px 0 24px; display: flex; align-items: center; justify-content: space-between; background: #0d6efd; color: #f8f9fa; }
.brand { font-size: 60.9px; }
.location { font-size: 37.2px; transform-origin: right center; }

.page { padding: 32px 24px 0; }
.controls { display: flex; gap: 48px; height: 76px; padding: 0 24px; margin-bottom: 64px; }
.control-text { font-size: 29.8px; -webkit-text-stroke-width: .2px; }
.search { display: flex; width: 873px; }
.field { flex: 1; display: flex; align-items: center; padding-left: 24px; background: #f8f9fa; border: 2px solid #dee2e6; border-right: 0; border-radius: 12px 0 0 12px; color: #595c60; }
.submit { width: 148px; display: flex; align-items: center; padding-left: 26px; background: #0d6efd; color: #fff; border-radius: 0 12px 12px 0; }
.select { flex: 1; display: flex; align-items: center; justify-content: space-between; padding: 0 28px 0 24px; background: #f8f9fa; border: 2px solid #dee2e6; border-radius: 12px; color: #212529; }
.chevron { width: 24px; height: 24px; }

.card { background: #fff; border: 6px solid #000; border-radius: 12px; }
.current { display: flex; height: 476px; padding: 32px 8px; }
.summary { width: 679px; border-right: 4px solid #000; padding-top: 31px; display: flex; flex-direction: column; align-items: center; }
.details { flex: 1; }
.lg { font-size: 51.4px; line-height: 66px; margin-top: 16px; }
.md { font-size: 46.7px; line-height: 60px; }
.sm { font-size: 37.2px; line-height: 48px; margin-bottom: 16px; }
.sky { width: 100px; height: 100px; margin: 14px 0 2px; }
.reading { display: flex; justify-content: center; gap: 22.5px; height: 80px; font-size: 42px; }
.icon { width: 64px; height: 64px; }
.value { line-height: 57px; height: 57px; white-space: nowrap; }
.c3 { width: 67.6px; }
.c5 { width: 112.7px; }
.c8 { width: 180.4px; }

.forecast { display: grid; grid-template-columns: 1fr 1fr; gap: 32px 48px; margin: 32px 0 48px; }
.day { height: 396.5px; padding-top: 32px; display: flex; flex-direction: column; align-items: center; }

.map { position: relative; width: 1350px; height: 1000px; margin-left: 16px; border: 6px solid #000; border-radius: 12px; overflow: hidden; background: #ece7e4; }
.lane { fill: none; stroke: #fbfaf9; stroke-width: 1.3; }
.stream path, .yellow path, .orange path, .median path, .ramp-yellow path, .ramp-orange path, #roads path { vector-effect: non-scaling-stroke; fill: none; stroke-linejoin: round; }
.stream path { stroke: #8fd3fb; stroke-width: 3; }
.casing { stroke: #d3d7e6; stroke-width: 9; fill: none; }
.road { stroke: #fff; stroke-width: 6; fill: none; }
.yellow path { stroke: #f7e06e; stroke-width: 10; }
.orange path { stroke: #ffb366; stroke-width: 12; }
.median path { stroke: #fff3e6; stroke-width: 1.5; }
.ramp-yellow path { stroke: #f3d75c; stroke-width: 1.5; }
.ramp-orange path { stroke: #ffa552; stroke-width: 1.5; }
.street text, .town text, .area text { paint-order: stroke; stroke: #f7f5f3; stroke-width: 3.5; stroke-linejoin: round; }
.street { font: 400 21px Roboto, sans-serif; fill: #2b2b31; }
.town { font: 500 28px Roboto, sans-serif; fill: #000; }
.area { font: 500 24px Roboto, sans-serif; }
.area .hamlet { font-weight: 400; font-size: 25px; fill: #222; }
.area .district { font-weight: 400; font-size: 22px; fill: #5f76a6; }
.medical { fill: #de474b; }
.park { fill: #2c811d; }
.shield rect { fill: #fff; stroke: #20222f; stroke-width: 2; }
.shield text { font: 700 18px Roboto, sans-serif; fill: #20222f; text-anchor: middle; }
.logo text { font: 600 32px "Open Sans", sans-serif; fill: #fff; stroke: #8c8987; stroke-width: 5; paint-order: stroke; stroke-linejoin: round; }

.zoom { position: absolute; top: 20px; right: 20px; width: 58px; background: #fff; border-radius: 8px; box-shadow: 0 0 0 4px rgba(0, 0, 0, .1); }
.zoom svg { width: 58px; height: 58px; }
.zoom svg + svg { border-top: 2px solid #ddd; }
.attribution { position: absolute; right: 0; bottom: 0; width: 516px; height: 40px; padding-left: 10px; background: rgba(255, 255, 255, .5); color: rgba(0, 0, 0, .75); font-size: 22.5px; line-height: 40px; }
.attribution .mono { -webkit-text-stroke-width: 0; }

.drawer-shadow { position: absolute; top: 0; right: 0; width: 32px; height: 1904px; background: linear-gradient(to right, transparent, rgba(0, 0, 0, .012) 35%, rgba(0, 0, 0, .038) 70%, rgba(0, 0, 0, .075)); mask-image: linear-gradient(to bottom, rgba(0, 0, 0, .5), #000 40px, #000 1860px, transparent); }
```
